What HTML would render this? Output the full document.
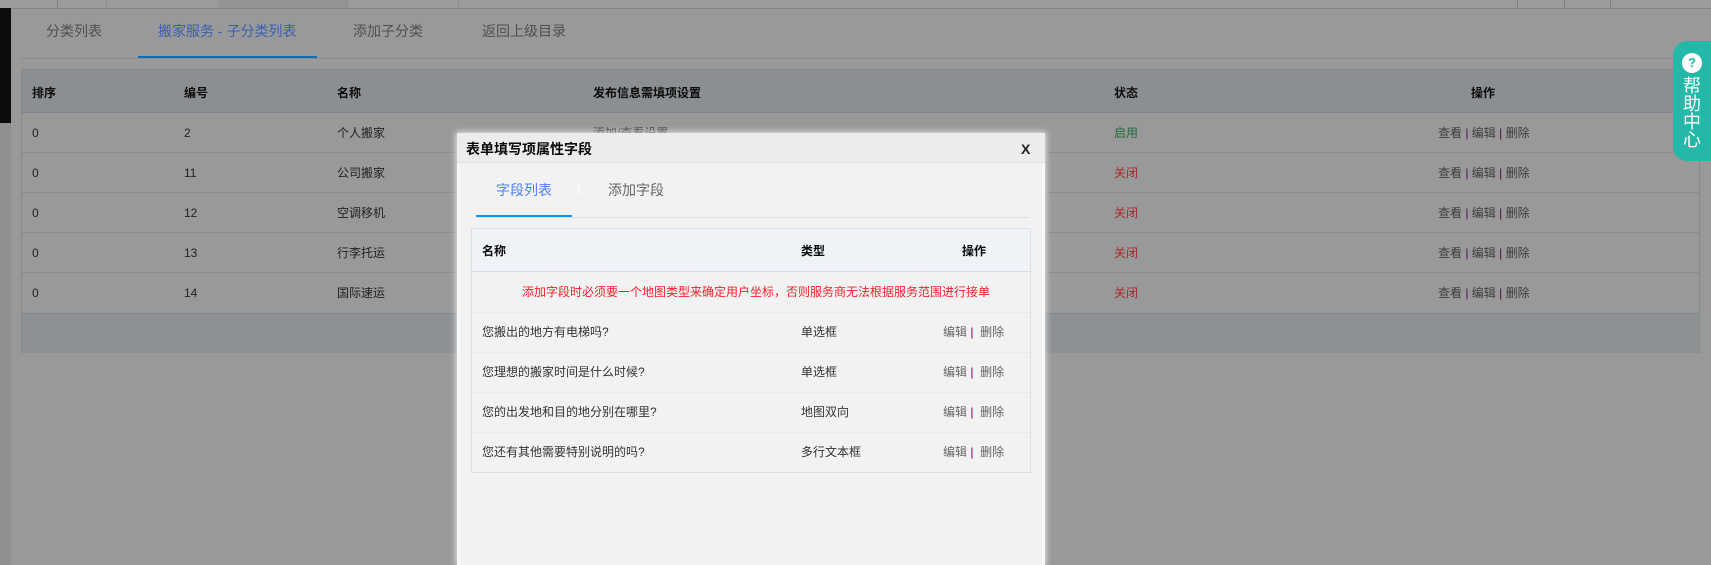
<!DOCTYPE html>
<html lang="zh">
<head>
<meta charset="utf-8">
<title>表单填写项属性字段</title>
<style>
html,body{margin:0;padding:0}
body{width:1711px;height:565px;overflow:hidden;background:#999;position:relative;font-family:"Liberation Sans","Noto Sans CJK SC",sans-serif;font-size:12px;color:#222}
.a{position:absolute;white-space:nowrap}
.r{height:1px;left:22px;width:1678px;background:#8c8c8c}
.t{line-height:16px}
.b{font-weight:bold;color:#0a0a0a}
.op{color:#3c3c3c}
.op i{font-style:normal;color:#4a1050}
.red{color:#a02a2a}
.m .t{color:#333}
.m .op{color:#666}
.m .op i{color:#800060}
.m .b{color:#0a0a0a}
</style>
</head>
<body>
<!-- top bar -->
<div class="a" style="left:0;top:0;width:1711px;height:8px;background:#9b9b9b;border-bottom:1px solid #858585"></div>
<div class="a" style="left:218px;top:0;width:129px;height:8px;background:#949494"></div>
<div class="a" style="left:57px;top:0;width:1px;height:8px;background:#7f7f7f"></div>
<div class="a" style="left:106px;top:0;width:1px;height:8px;background:#8c8c8c"></div>
<div class="a" style="left:347px;top:0;width:1px;height:8px;background:#8c8c8c"></div>
<div class="a" style="left:458px;top:0;width:1px;height:8px;background:#8c8c8c"></div>
<div class="a" style="left:1517px;top:0;width:1px;height:8px;background:#7f7f7f"></div>
<div class="a" style="left:1564px;top:0;width:1px;height:8px;background:#7f7f7f"></div>
<div class="a" style="left:1610px;top:0;width:1px;height:8px;background:#7f7f7f"></div>
<!-- left strip -->
<div class="a" style="left:0;top:9px;width:11px;height:556px;background:#8f8f8f"></div>
<div class="a" style="left:0;top:8px;width:11px;height:115px;background:#0c0c0c"></div>
<!-- tabs -->
<div class="a" style="left:21px;top:58px;width:1679px;height:1px;background:#8a8a8a"></div>
<div class="a" style="left:46px;top:22px;font-size:14px;line-height:18px;color:#4f4f4f">分类列表</div>
<div class="a" style="left:158px;top:22px;font-size:14px;line-height:18px;color:#3a5fae">搬家服务 - 子分类列表</div>
<div class="a" style="left:353px;top:22px;font-size:14px;line-height:18px;color:#4f4f4f">添加子分类</div>
<div class="a" style="left:482px;top:22px;font-size:14px;line-height:18px;color:#4f4f4f">返回上级目录</div>
<div class="a" style="left:138px;top:56px;width:179px;height:2px;background:#0b6db3"></div>
<!-- main table -->
<div class="a" style="left:21px;top:69px;width:1679px;height:284px;border:1px solid #858a8d;box-sizing:border-box;border-bottom-color:#808080"></div>
<div class="a" style="left:22px;top:70px;width:1677px;height:42px;background:#8b8f92;border-bottom:1px solid #7e8590"></div>
<div class="a" style="left:22px;top:313px;width:1677px;height:39px;background:#8d9193;border-top:1px solid #888"></div>
<div class="a r" style="top:152px"></div>
<div class="a r" style="top:192px"></div>
<div class="a r" style="top:232px"></div>
<div class="a r" style="top:272px"></div>

<div class="a t b" style="left:32px;top:85px">排序</div>
<div class="a t b" style="left:184px;top:85px">编号</div>
<div class="a t b" style="left:337px;top:85px">名称</div>
<div class="a t b" style="left:593px;top:85px">发布信息需填项设置</div>
<div class="a t b" style="left:1114px;top:85px">状态</div>
<div class="a t b" style="left:1471px;top:85px">操作</div>

<div class="a t" style="left:32px;top:125px">0</div><div class="a t" style="left:184px;top:125px">2</div><div class="a t" style="left:337px;top:125px">个人搬家</div><div class="a t op" style="left:593px;top:125px">添加/查看设置</div><div class="a t" style="left:1114px;top:125px;color:#1f6b3a">启用</div><div class="a t op" style="left:1438px;top:125px">查看 <i>|</i> 编辑 <i>|</i> 删除</div>
<div class="a t" style="left:32px;top:165px">0</div><div class="a t" style="left:184px;top:165px">11</div><div class="a t" style="left:337px;top:165px">公司搬家</div><div class="a t red" style="left:1114px;top:165px">关闭</div><div class="a t op" style="left:1438px;top:165px">查看 <i>|</i> 编辑 <i>|</i> 删除</div>
<div class="a t" style="left:32px;top:205px">0</div><div class="a t" style="left:184px;top:205px">12</div><div class="a t" style="left:337px;top:205px">空调移机</div><div class="a t red" style="left:1114px;top:205px">关闭</div><div class="a t op" style="left:1438px;top:205px">查看 <i>|</i> 编辑 <i>|</i> 删除</div>
<div class="a t" style="left:32px;top:245px">0</div><div class="a t" style="left:184px;top:245px">13</div><div class="a t" style="left:337px;top:245px">行李托运</div><div class="a t red" style="left:1114px;top:245px">关闭</div><div class="a t op" style="left:1438px;top:245px">查看 <i>|</i> 编辑 <i>|</i> 删除</div>
<div class="a t" style="left:32px;top:285px">0</div><div class="a t" style="left:184px;top:285px">14</div><div class="a t" style="left:337px;top:285px">国际速运</div><div class="a t red" style="left:1114px;top:285px">关闭</div><div class="a t op" style="left:1438px;top:285px">查看 <i>|</i> 编辑 <i>|</i> 删除</div>

<!-- help -->
<div class="a" style="left:1673px;top:41px;width:38px;height:120px;background:#24b8a8;border-radius:14px 0 0 14px"></div>
<div class="a" style="left:1682px;top:53px;width:20px;height:20px;border-radius:50%;background:#fff;color:#24b8a8;font-weight:bold;font-size:13px;line-height:20px;text-align:center">?</div>
<div class="a" style="left:1682px;top:77px;width:20px;font-size:18px;line-height:18px;color:#fff;white-space:normal;text-align:center">帮助中心</div>

<!-- modal -->
<div class="a m" style="left:457px;top:133px;width:588px;height:432px;background:#f2f2f2;box-shadow:0 0 6px 1px rgba(255,255,255,.75)">
  <div class="a" style="left:0;top:0;width:588px;height:29px;background:#ececec;border-bottom:1px solid #e2e2e2"></div>
  <div class="a" style="left:0;top:30px;width:3px;height:402px;background:#f7f7f7"></div>
  <div class="a" style="right:0;top:30px;width:3px;height:402px;background:#f7f7f7"></div>
  <div class="a" style="left:9px;top:8px;font-size:14px;line-height:16px;font-weight:bold;color:#0a0a0a">表单填写项属性字段</div>
  <div class="a" style="left:564px;top:8px;font-size:14px;line-height:16px;font-weight:bold;color:#222">X</div>

  <div class="a" style="left:39px;top:48px;font-size:14px;line-height:18px;color:#4f82ef">字段列表</div>
  <div class="a" style="left:121px;top:52px;width:1px;height:10px;background:#fff"></div>
  <div class="a" style="left:151px;top:48px;font-size:14px;line-height:18px;color:#666">添加字段</div>
  <div class="a" style="left:19px;top:84px;width:554px;height:1px;background:#dfdfdf"></div>
  <div class="a" style="left:19px;top:82px;width:96px;height:2px;background:#0a96f5"></div>

  <div class="a" style="left:14px;top:95px;width:560px;height:245px;border:1px solid #dcdfe2;box-sizing:border-box"></div>
  <div class="a" style="left:15px;top:96px;width:558px;height:42px;background:#eff3f7;border-bottom:1px solid #d6dde6"></div>
  <div class="a t b" style="left:25px;top:110px">名称</div>
  <div class="a t b" style="left:344px;top:110px">类型</div>
  <div class="a t b" style="left:505px;top:110px">操作</div>

  <div class="a t" style="left:65px;top:151px;color:#f5222d">添加字段时必须要一个地图类型来确定用户坐标，否则服务商无法根据服务范围进行接单</div>
  <div class="a" style="left:15px;top:179px;width:558px;height:1px;background:#ebebeb"></div>

  <div class="a t" style="left:25px;top:191px">您搬出的地方有电梯吗?</div>
  <div class="a t" style="left:344px;top:191px">单选框</div>
  <div class="a t op" style="left:486px;top:191px">编辑 <i>|</i>&nbsp; 删除</div>
  <div class="a" style="left:15px;top:219px;width:558px;height:1px;background:#ebebeb"></div>

  <div class="a t" style="left:25px;top:231px">您理想的搬家时间是什么时候?</div>
  <div class="a t" style="left:344px;top:231px">单选框</div>
  <div class="a t op" style="left:486px;top:231px">编辑 <i>|</i>&nbsp; 删除</div>
  <div class="a" style="left:15px;top:259px;width:558px;height:1px;background:#ebebeb"></div>

  <div class="a t" style="left:25px;top:271px">您的出发地和目的地分别在哪里?</div>
  <div class="a t" style="left:344px;top:271px">地图双向</div>
  <div class="a t op" style="left:486px;top:271px">编辑 <i>|</i>&nbsp; 删除</div>
  <div class="a" style="left:15px;top:299px;width:558px;height:1px;background:#ebebeb"></div>

  <div class="a t" style="left:25px;top:311px">您还有其他需要特别说明的吗?</div>
  <div class="a t" style="left:344px;top:311px">多行文本框</div>
  <div class="a t op" style="left:486px;top:311px">编辑 <i>|</i>&nbsp; 删除</div>
</div>
</body>
</html>
